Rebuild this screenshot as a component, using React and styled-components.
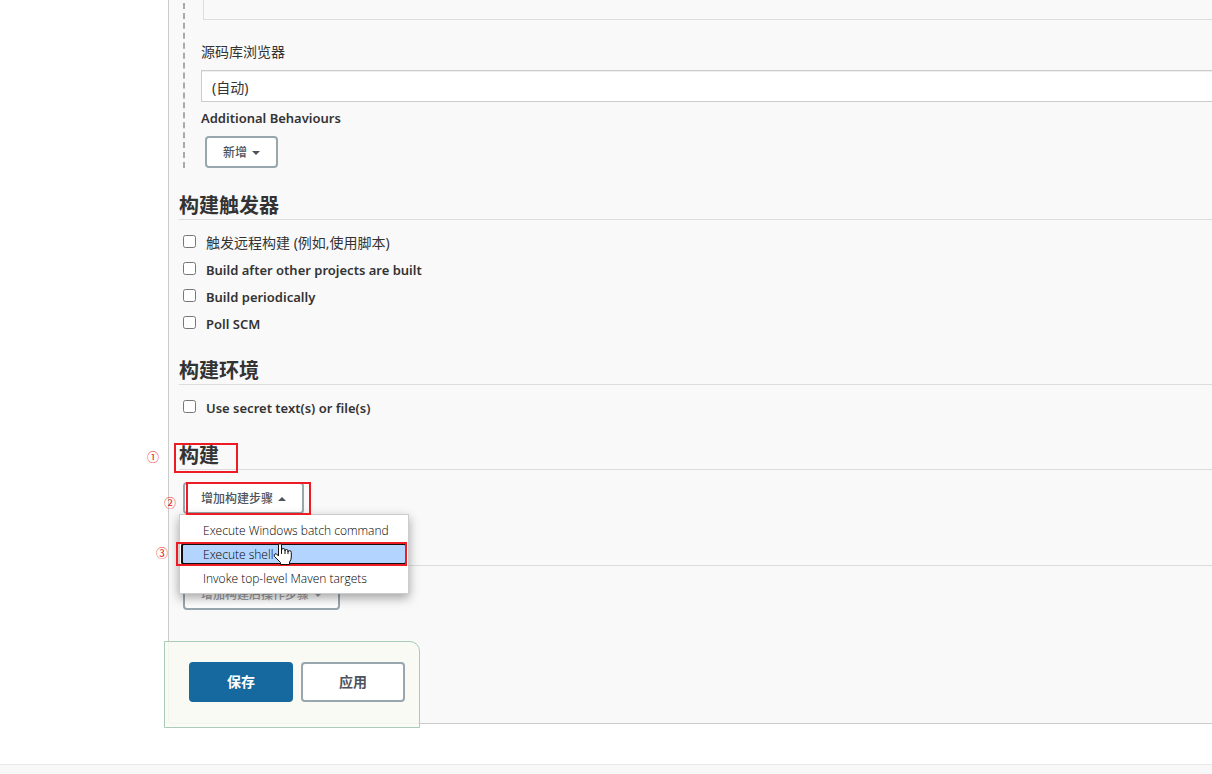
import React from "react";
import styled, { createGlobalStyle } from "styled-components";

const GlobalStyle = createGlobalStyle`
  *, *::before, *::after { box-sizing: border-box; }
  body {
    margin: 0;
    background: #fff;
    color: #333;
    font: 600 13px/20px "Noto Sans", "Noto Sans CJK SC", sans-serif;
    overflow-x: hidden;
  }
  button, select, input { font: inherit; }
`;

const Page = styled.div`
  display: flex;
  flex-direction: column;
  min-height: 100vh;
`;

const Panel = styled.main`
  position: relative;
  margin: 0 0 40px 168px;
  padding: 0 0 113px 10px;
  background: #f9f9f9;
  border: solid #ccc;
  border-width: 0 0 1px 1px;
  border-bottom-left-radius: 4px;
`;

const ScmGroup = styled.section`
  display: flex;
  flex-direction: column;
  margin: -7px 0 0 4px;
  padding: 7px 0 0 16px;
  border-left: 2px dashed #aaa;
`;

const RepositoryBox = styled.div`
  height: 20px;
  margin-left: 2px;
  border: solid #ddd;
  border-width: 0 0 1px 1px;
`;

const FieldLabel = styled.label`
  margin-top: 22px;
  font-size: 14px;
  font-weight: 400;
`;

const Select = styled.select`
  appearance: none;
  width: 100%;
  height: 32px;
  margin-top: 8px;
  padding: 4px 10px 0;
  color: #333;
  font-size: 14px;
  font-weight: 400;
  background: #fff;
  border: 1px solid #ccc;
  border-right: 0;
  border-radius: 0;
  box-shadow: inset 0 1px 1px #eee;
`;

const FieldTitle = styled.div`
  margin: 6px 0 8px;
`;

const MenuButton = styled.button`
  display: inline-flex;
  align-items: center;
  gap: 5px;
  height: 32px;
  padding: 1px 16px 0;
  color: ${(p) => (p.$faded ? "#999da3" : "#4d545d")};
  font-size: 12px;
  font-weight: 500;
  white-space: nowrap;
  background: #fff;
  border: 2px solid #98a6ad;
  border-radius: 4px;
  align-self: flex-start;
  margin-left: 4px;
`;

const Caret = styled.span`
  border: 4px solid transparent;
  border-top-color: ${(p) => (p.$up ? "transparent" : "currentColor")};
  border-bottom-color: ${(p) => (p.$up ? "currentColor" : "transparent")};
  border-top-width: ${(p) => (p.$up ? "0" : "4px")};
  border-bottom-width: ${(p) => (p.$up ? "4px" : "0")};
`;

const Section = styled.section`
  padding-top: ${(p) => p.$top || 24}px;
`;

const Heading = styled.h2`
  position: relative;
  margin: 0;
  height: 28px;
  color: #333;
  font-size: 20px;
  font-weight: 700;
  line-height: 28px;
  border-bottom: 1px solid #ddd;
`;

const Options = styled.div`
  display: flex;
  flex-direction: column;
  gap: 7px;
  padding: 13px 0 0 4px;
`;

const Option = styled.label`
  display: flex;
  align-items: flex-start;
  gap: 10px;
`;

const Tick = styled.input`
  width: 13px;
  height: 13px;
  margin: 2px 0 0;
`;

const CjkText = styled.span`
  font-size: 14px;
  font-weight: 400;
`;

const Step = styled.div`
  position: relative;
  display: flex;
  padding-top: 12px;
`;

const Menu = styled.ul`
  position: absolute;
  z-index: 2;
  top: 44px;
  left: 0;
  width: 230px;
  margin: 0;
  padding: 4px 1px 2px;
  list-style: none;
  background: #fff;
  border: 1px solid #ccc;
  box-shadow: 0 4px 10px rgba(0, 0, 0, 0.35);
`;

const MenuItem = styled.li`
  position: relative;
  padding-bottom: 2px;
`;

const MenuAction = styled.button`
  display: block;
  width: 100%;
  height: 22px;
  padding: 2px 20px 0;
  color: #000;
  font-family: "Open Sans", sans-serif;
  font-size: 12px;
  font-weight: 300;
  line-height: 16px;
  text-align: left;
  white-space: nowrap;
  background: ${(p) => (p.$active ? "#b3d4ff" : "transparent")};
  border: 2px solid ${(p) => (p.$active ? "#101010" : "transparent")};
  border-radius: 3px;
`;

const Outline = styled.span`
  position: absolute;
  z-index: 3;
  top: ${(p) => p.$top}px;
  left: ${(p) => p.$left}px;
  width: ${(p) => p.$width}px;
  height: ${(p) => p.$height}px;
  border: 2px solid #ed1c24;
  pointer-events: none;
`;

const Marker = styled.span`
  position: absolute;
  z-index: 3;
  top: ${(p) => p.$top}px;
  left: ${(p) => p.$left}px;
  color: #ed1c24;
  font: 400 12px/16px "Noto Sans CJK SC", sans-serif;
`;

const Pointer = styled.svg`
  position: absolute;
  z-index: 4;
  top: 0;
  left: 92px;
`;

const Divider = styled.hr`
  margin: 51px 0 0;
  border: 0;
  border-top: 1px solid #ddd;
`;

const SaveBar = styled.div`
  position: absolute;
  z-index: 1;
  left: -5px;
  bottom: -5px;
  display: flex;
  gap: 8px;
  padding: 20px 14px 25px 24px;
  background: rgba(248, 250, 242, 0.85);
  border: 1px solid #a9cbb7;
  border-top-right-radius: 10px;
`;

const FormButton = styled.button`
  width: 104px;
  height: 40px;
  color: ${(p) => (p.$primary ? "#fff" : "#4d545d")};
  font-size: 14px;
  font-weight: 700;
  background: ${(p) => (p.$primary ? "#15699f" : "#fff")};
  border: 2px solid ${(p) => (p.$primary ? "#15699f" : "#98a6ad")};
  border-radius: 4px;
`;

const Footer = styled.footer`
  flex: 1;
  min-height: 10px;
  background: #f8f8f8;
  border-top: 1px solid #e8e8e8;
`;

const triggers = [
  { text: "触发远程构建 (例如,使用脚本)", cjk: true },
  { text: "Build after other projects are built" },
  { text: "Build periodically" },
  { text: "Poll SCM" },
];

function CheckOption({ text, cjk }) {
  return (
    <Option>
      <Tick type="checkbox" />
      {cjk ? <CjkText>{text}</CjkText> : <span>{text}</span>}
    </Option>
  );
}

function HandPointer() {
  return (
    <Pointer width="20" height="23" viewBox="0 0 20 23" aria-hidden="true">
      <path
        d="M5.500 13V2Q5.500 .7 7 .7T8.500 2V7Q8.500 5.500 10.200 5.500T12 7V8Q12 6.500 13.500 6.500T15 8V9Q15 7.700 16.700 7.700T18.300 9.500V14Q18.300 17 16.500 19V21.500H7.500V19.500L1.500 13.500Q.5 11.500 2 10.800T5.500 13Z"
        fill="#fff"
        stroke="#111"
        strokeLinejoin="round"
      />
      <path d="M8.500 6V11M12 7.500V11M15 8.500V11" fill="none" stroke="#111" />
    </Pointer>
  );
}

export default function App() {
  return (
    <Page>
      <GlobalStyle />
      <Panel>
        <ScmGroup>
          <RepositoryBox />
          <FieldLabel htmlFor="browser">源码库浏览器</FieldLabel>
          <Select id="browser">
            <option>(自动)</option>
          </Select>
          <FieldTitle>Additional Behaviours</FieldTitle>
          <MenuButton type="button">
            新增 <Caret />
          </MenuButton>
        </ScmGroup>

        <Section>
          <Heading>构建触发器</Heading>
          <Options>
            {triggers.map((t) => (
              <CheckOption key={t.text} {...t} />
            ))}
          </Options>
        </Section>

        <Section $top={23}>
          <Heading>构建环境</Heading>
          <Options>
            <CheckOption text="Use secret text(s) or file(s)" />
          </Options>
        </Section>

        <Section>
          <Heading>
            构建
            <Outline $top={1} $left={-5} $width={64} $height={30} />
            <Marker $top={7} $left={-32}>①</Marker>
          </Heading>
          <Step>
            <MenuButton type="button" aria-expanded="true">
              增加构建步骤 <Caret $up />
            </MenuButton>
            <Outline $top={12} $left={7} $width={125} $height={33} />
            <Marker $top={25} $left={-15}>②</Marker>
            <Menu>
              <MenuItem>
                <MenuAction type="button">Execute Windows batch command</MenuAction>
              </MenuItem>
              <MenuItem>
                <MenuAction type="button" $active>Execute shell</MenuAction>
                <Outline $top={-1} $left={-5} $width={231} $height={24} />
                <Marker $top={2} $left={-25}>③</Marker>
                <HandPointer />
              </MenuItem>
              <MenuItem>
                <MenuAction type="button">Invoke top-level Maven targets</MenuAction>
              </MenuItem>
            </Menu>
          </Step>
        </Section>

        <Divider />
        <Step>
          <MenuButton type="button" $faded>
            增加构建后操作步骤 <Caret />
          </MenuButton>
        </Step>

        <SaveBar>
          <FormButton type="submit" $primary>保存</FormButton>
          <FormButton type="button">应用</FormButton>
        </SaveBar>
      </Panel>
      <Footer />
    </Page>
  );
}
